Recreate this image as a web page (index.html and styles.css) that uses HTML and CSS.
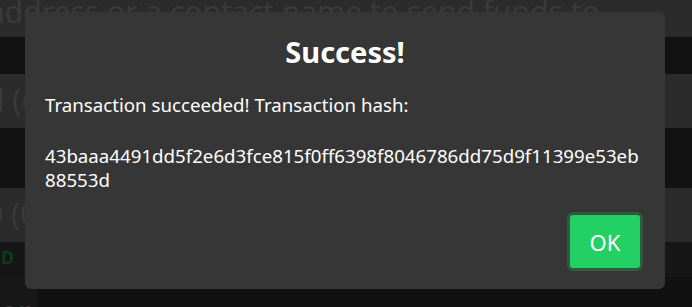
FILE: index.html
```html
<!DOCTYPE html>
<html lang="en">
<head>
    <meta charset="UTF-8">
    <meta name="viewport" content="width=device-width, initial-scale=1.0">
    <title>Send funds</title>
    <link rel="stylesheet" href="styles.css">
</head>
<body>
    <div class="page">
        <div class="band light hint">address or a contact name to send funds to</div>
        <div class="band dark"></div>
        <div class="band light field">d (e</div>
        <div class="band dark tall"></div>
        <div class="band light field">0 (0</div>
        <div class="band dark id">ID</div>
        <div class="footer">
            <div class="footer-cell">or</div>
        </div>
    </div>

    <!-- Modal -->
    <div class="modal">
        <h2 class="modal-title">Success!</h2>
        <p class="modal-text">Transaction succeeded! Transaction hash:</p>
        <p class="modal-text hash">43baaa4491dd5f2e6d3fce815f0ff6398f8046786dd75d9f11399e53eb88553d</p>
        <div class="modal-actions">
            <button class="ok-btn">OK</button>
        </div>
    </div>
</body>
</html>
```

FILE: styles.css
```css
body {
    margin: 0;
    padding: 0;
    background: #111111;
    font-family: 'Noto Sans', 'Open Sans', Arial, sans-serif;
    overflow: hidden;
}
.page {
    display: flex;
    flex-direction: column;
    height: 307px;
    overflow: hidden;
}
.band {
    flex-shrink: 0;
    height: 37px;
    font-size: 30px;
    line-height: 37px;
    white-space: nowrap;
    overflow: hidden;
}
.band.light {
    background: #2b2b2b;
    color: #3a3a3a;
}
.band.dark {
    background: #121212;
}
.hint {
    line-height: 24px;
    text-indent: -12px;
}
.band.field {
    height: 54px;
    line-height: 52px;
    text-indent: -14px;
}
.band.tall {
    height: 60px;
}
.band.id {
    height: 35px;
    background: #161616;
    color: #0f3a1e;
    font-size: 18px;
    line-height: 30px;
    font-weight: bold;
    text-indent: -6px;
}
.footer {
    flex: 1;
    min-height: 0;
    display: flex;
    overflow: hidden;
}
.footer-cell {
    width: 37px;
    background: #171717;
    color: #3a3a3a;
    font-size: 30px;
    line-height: 70px;
    overflow: hidden;
}
.modal {
    position: absolute;
    top: 12px;
    left: 25px;
    width: 640px;
    height: 277px;
    box-sizing: border-box;
    padding: 22px 20px 18px;
    background: #363636;
    border-radius: 6px;
    color: #fff;
    display: flex;
    flex-direction: column;
}
.modal-title {
    margin: 0;
    text-align: center;
    font-size: 29px;
    line-height: 36px;
    font-weight: bold;
}
.modal-text {
    margin: 0;
    font-size: 18.7px;
    line-height: 24px;
}
.modal-title + .modal-text {
    margin-top: 23px;
}
.hash {
    margin-top: 27px;
    word-break: break-all;
}
.modal-actions {
    margin-top: auto;
    display: flex;
    justify-content: flex-end;
    padding-right: 2px;
}
.ok-btn {
    width: 76px;
    height: 59px;
    background: #22d063;
    border: 3px solid #2f5c3f;
    border-radius: 6px;
    color: #fff;
    font-family: inherit;
    font-size: 22px;
    cursor: pointer;
}
```
